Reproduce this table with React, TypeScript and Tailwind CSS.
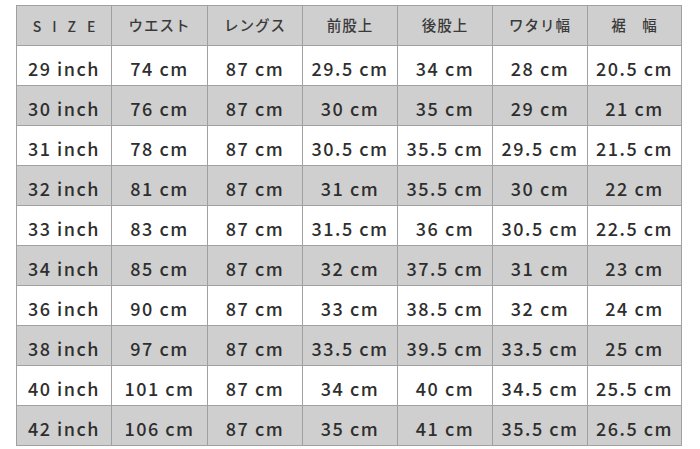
import React from "react";

const headers = ["SIZE", "ウエスト", "レングス", "前股上", "後股上", "ワタリ幅", "裾　幅"];
const rows: string[][] = [
  ["29 inch", "74 cm", "87 cm", "29.5 cm", "34 cm", "28 cm", "20.5 cm"],
  ["30 inch", "76 cm", "87 cm", "30 cm", "35 cm", "29 cm", "21 cm"],
  ["31 inch", "78 cm", "87 cm", "30.5 cm", "35.5 cm", "29.5 cm", "21.5 cm"],
  ["32 inch", "81 cm", "87 cm", "31 cm", "35.5 cm", "30 cm", "22 cm"],
  ["33 inch", "83 cm", "87 cm", "31.5 cm", "36 cm", "30.5 cm", "22.5 cm"],
  ["34 inch", "85 cm", "87 cm", "32 cm", "37.5 cm", "31 cm", "23 cm"],
  ["36 inch", "90 cm", "87 cm", "33 cm", "38.5 cm", "32 cm", "24 cm"],
  ["38 inch", "97 cm", "87 cm", "33.5 cm", "39.5 cm", "33.5 cm", "25 cm"],
  ["40 inch", "101 cm", "87 cm", "34 cm", "40 cm", "34.5 cm", "25.5 cm"],
  ["42 inch", "106 cm", "87 cm", "35 cm", "41 cm", "35.5 cm", "26.5 cm"],
];
const widths = [95, 96, 95, 95, 95, 95, 94];

export default function App() {
  return (
    <div
      className="w-[700px] h-[449px] bg-white pt-[5px] pl-[16px] text-[#333]"
      style={{ fontFamily: '"Noto Sans CJK JP", "Noto Sans", sans-serif' }}
    >
      <table className="border-collapse table-fixed w-[666px]">
        <colgroup>
          {widths.map((w, i) => (
            <col key={i} style={{ width: w }} />
          ))}
        </colgroup>
        <thead>
          <tr className="bg-[#cfcfcf] h-[40px]">
            {headers.map((h, i) => (
              <th
                key={i}
                className={`border border-[#a0a0a0] p-0 font-medium text-center align-middle leading-none text-[#3a3a3a] ${
                  i === 0 ? "text-[14px] tracking-[11px] pl-[11px]" : "text-[14.5px] tracking-[1px]"
                }`}
              >
                {h}
              </th>
            ))}
          </tr>
        </thead>
        <tbody>
          {rows.map((r, ri) => (
            <tr key={ri} className={`h-[40px] ${ri % 2 === 1 ? "bg-[#cfcfcf]" : "bg-white"}`}>
              {r.map((c, ci) => (
                <td
                  key={ci}
                  className="border border-[#a0a0a0] p-0 pt-[4px] text-center align-middle text-[18px] font-medium tracking-[1.5px] leading-none whitespace-nowrap text-[#2e2e2e]"
                >
                  {c}
                </td>
              ))}
            </tr>
          ))}
        </tbody>
      </table>
    </div>
  );
}
